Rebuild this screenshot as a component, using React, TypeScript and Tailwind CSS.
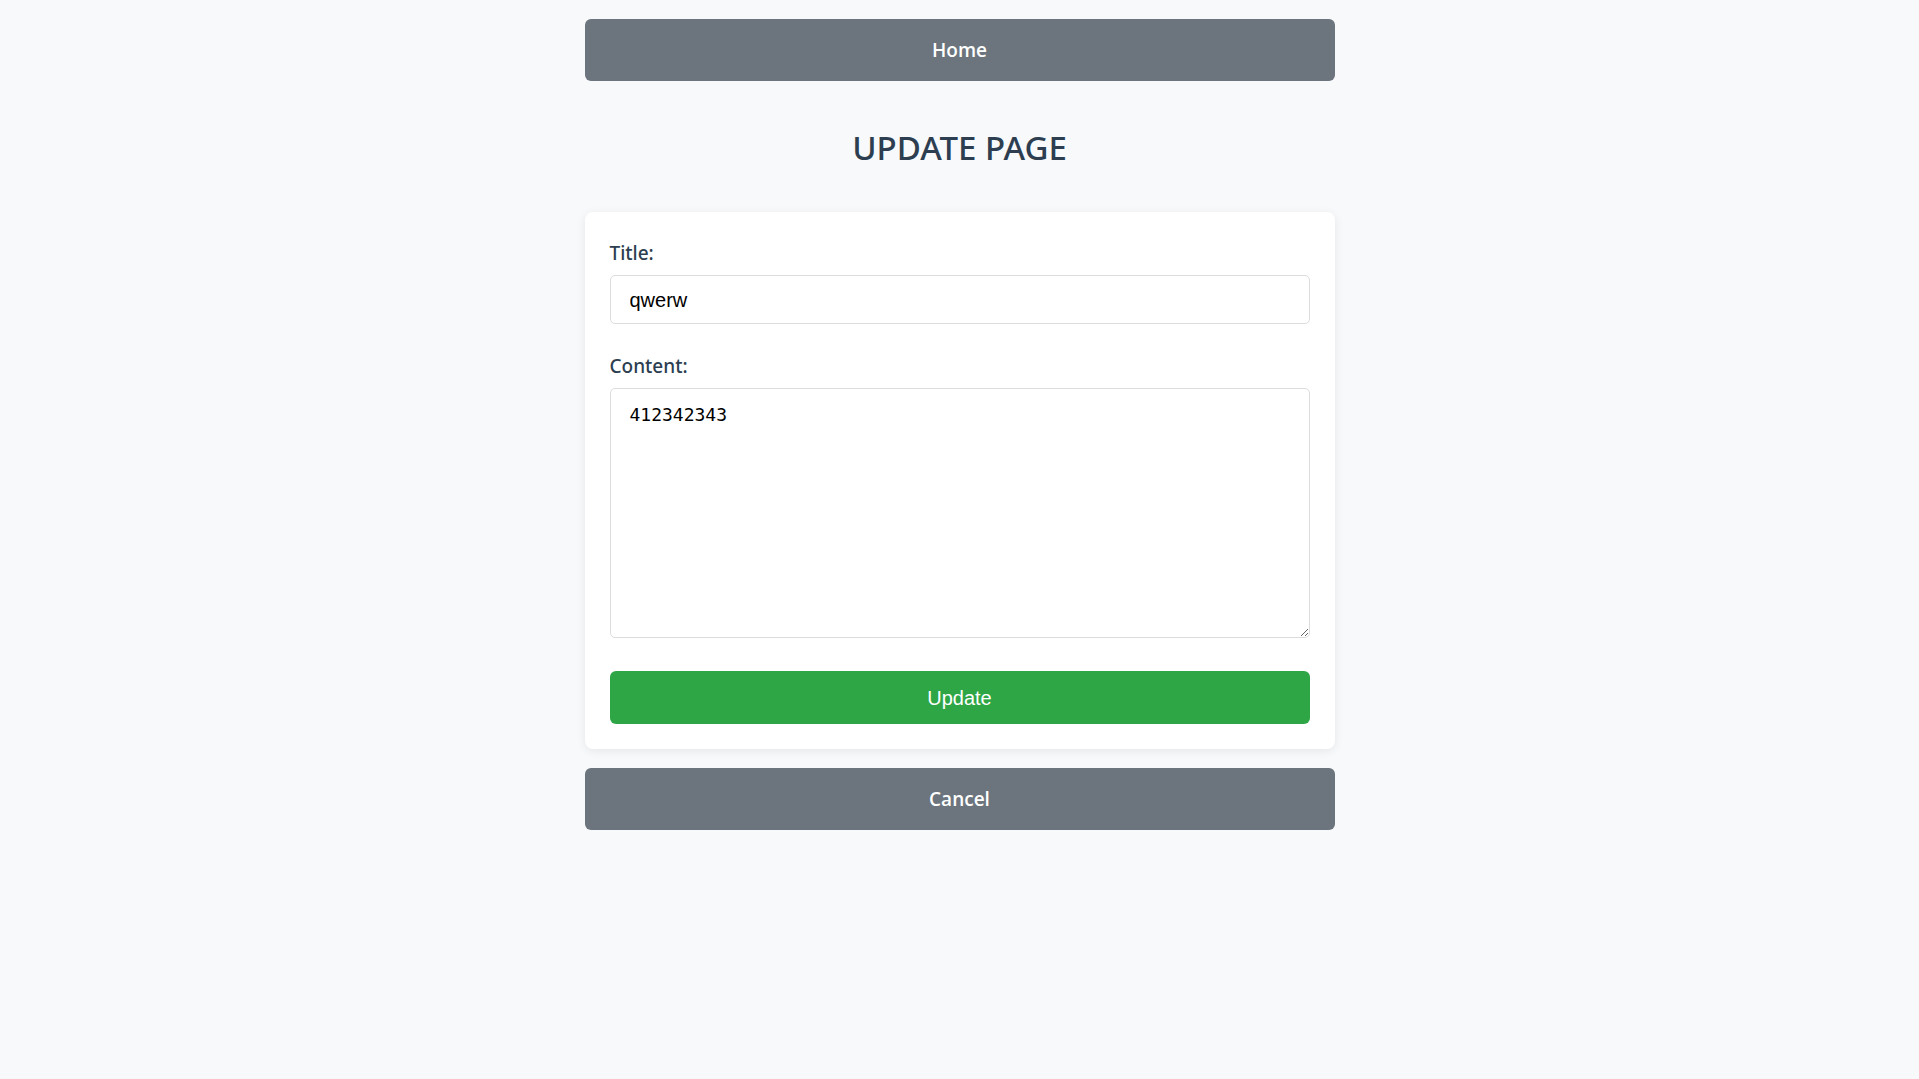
import { useState } from 'react';

const sans = "font-['Open_Sans','Noto_Sans',sans-serif]";
const medium = "font-['Noto_Sans','Open_Sans',sans-serif]";

export default function App() {
  const [title, setTitle] = useState('qwerw');
  const [content, setContent] = useState('412342343');

  return (
    <div className="min-h-screen bg-[#f8f9fa] pt-[19px]">
      <div className="w-[750px] mx-auto">
        <button
          className={`w-full h-[62px] rounded-[6px] bg-[#6c757d] text-white text-[19px] font-semibold ${sans}`}
        >
          Home
        </button>

        <h1
          className={`mt-[47px] mb-[44px] text-center text-[33px] leading-[40px] font-medium text-[#2c3e50] ${medium}`}
        >
          UPDATE PAGE
        </h1>

        <form
          className="bg-white rounded-[8px] shadow-[0_2px_10px_rgba(0,0,0,0.08)] p-[25px]"
          onSubmit={(e) => e.preventDefault()}
        >
          <label className={`block text-[19px] leading-[32px] font-medium text-[#2c3e50] mb-[6px] ${medium}`}>
            Title:
          </label>
          <input
            value={title}
            onChange={(e) => setTitle(e.target.value)}
            className="block w-full h-[49px] px-[19px] pt-[2px] border border-[#dcdcdc] rounded-[5px] bg-white text-[20px] text-black font-['Liberation_Sans',Arial,sans-serif] outline-none"
          />

          <label
            className={`block mt-[26px] text-[19px] leading-[32px] font-medium text-[#2c3e50] mb-[6px] ${medium}`}
          >
            Content:
          </label>
          <textarea
            value={content}
            onChange={(e) => setContent(e.target.value)}
            className="block w-full h-[250px] px-[19px] pt-[12px] border border-[#dcdcdc] rounded-[5px] bg-white text-[18px] text-black font-['DejaVu_Sans_Mono',monospace] outline-none"
          />

          <button
            type="submit"
            className="mt-[33px] w-full h-[53px] rounded-[6px] bg-[#2ea646] text-white text-[20px] font-['Liberation_Sans',Arial,sans-serif]"
          >
            Update
          </button>
        </form>

        <button
          className={`mt-[19px] w-full h-[62px] rounded-[6px] bg-[#6c757d] text-white text-[19px] font-semibold ${sans}`}
        >
          Cancel
        </button>
      </div>
    </div>
  );
}
